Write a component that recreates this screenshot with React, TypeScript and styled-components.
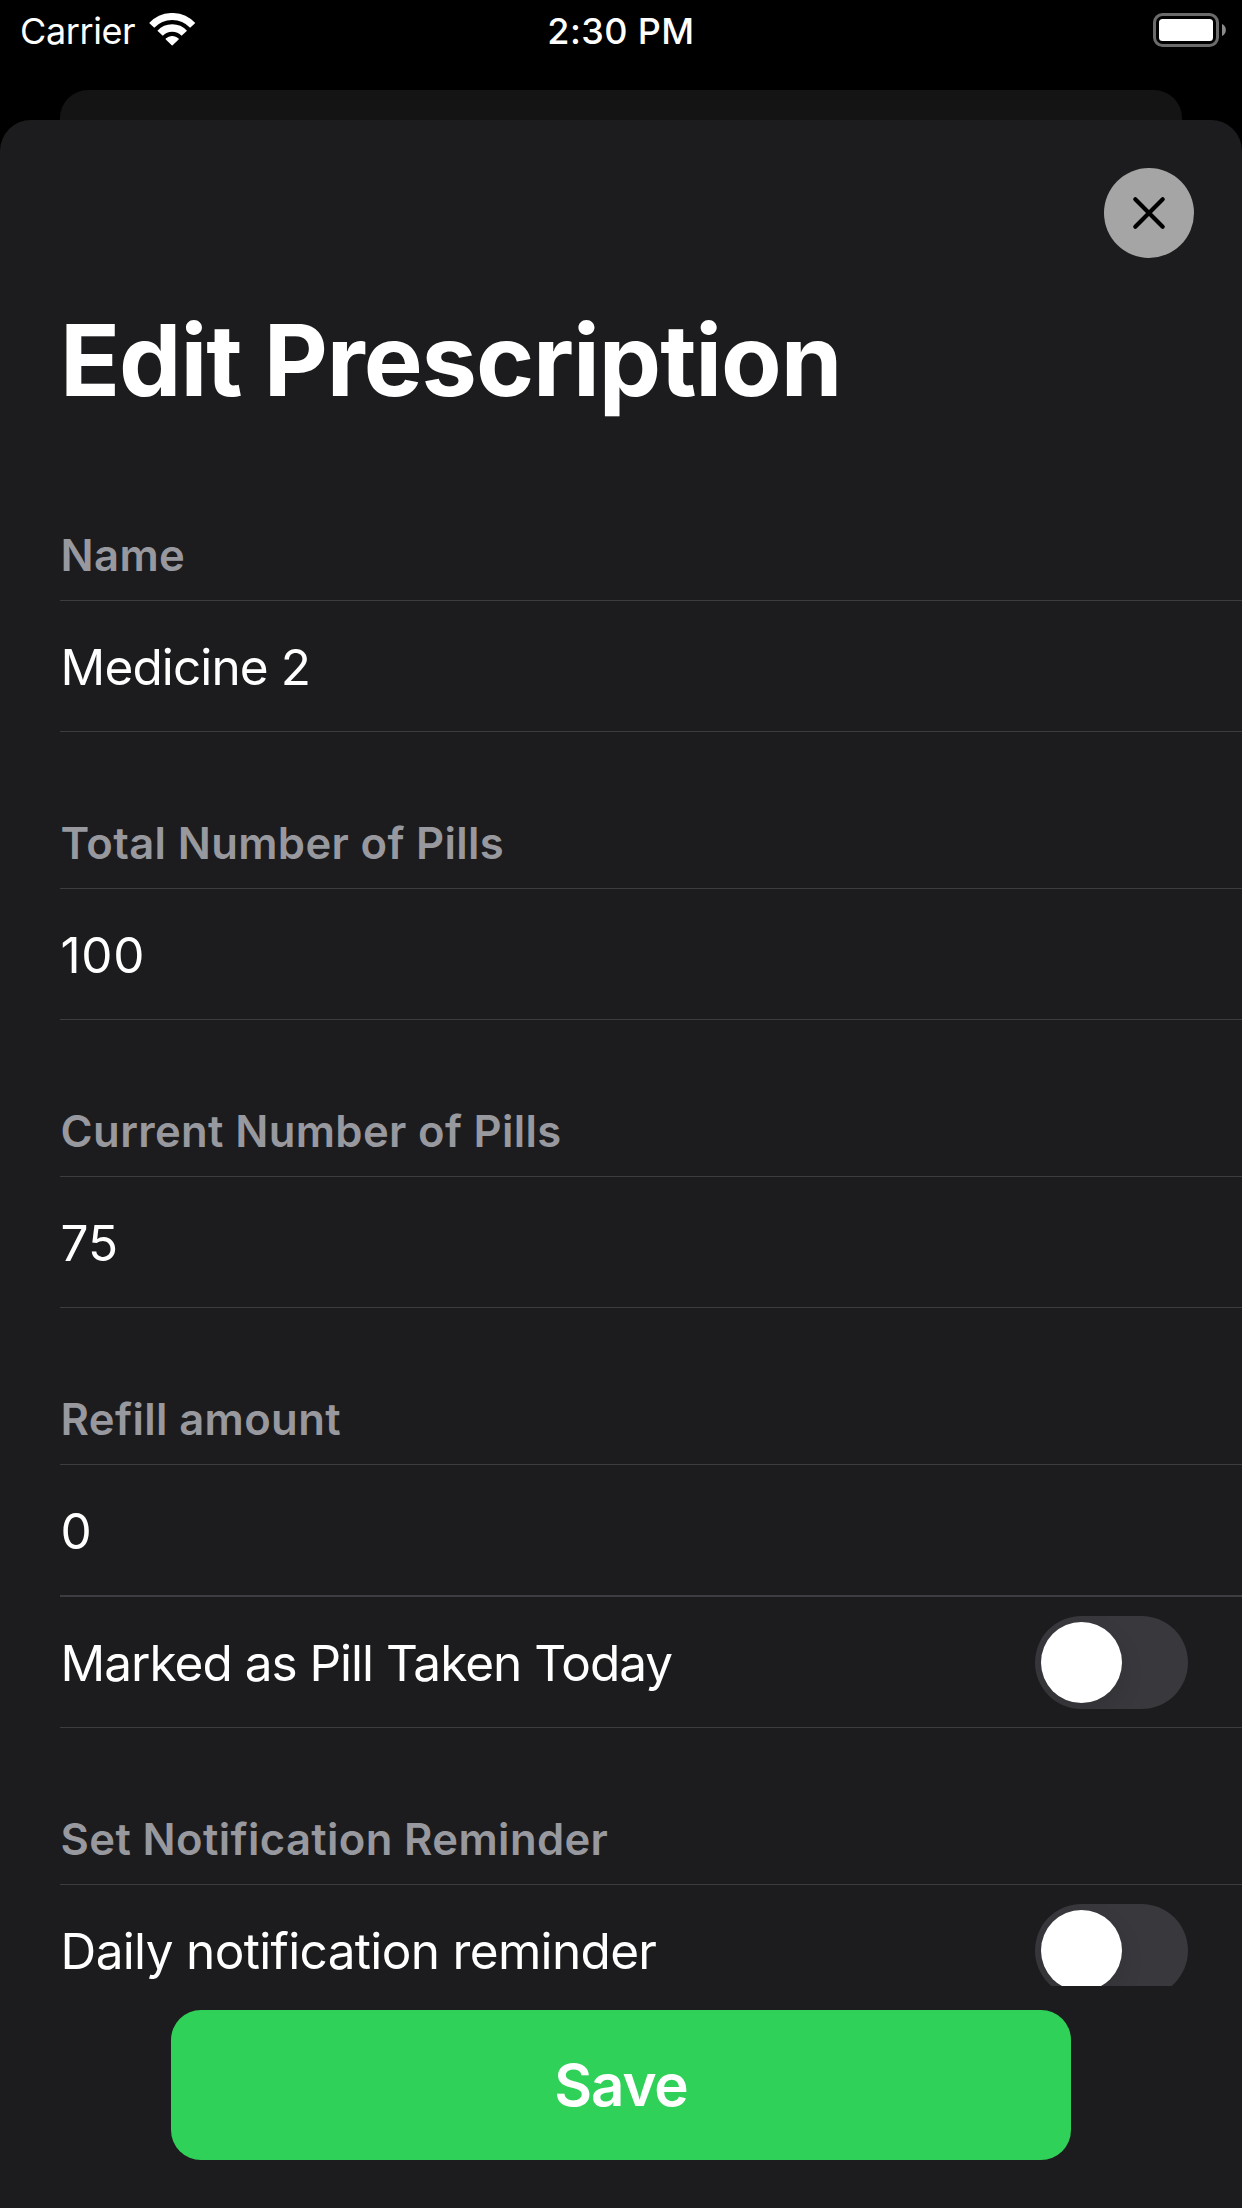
import React from 'react';
import styled, { createGlobalStyle } from 'styled-components';

const GlobalStyle = createGlobalStyle`
  *, *::before, *::after {
    box-sizing: border-box;
  }
  body {
    margin: 0;
    background: #000;
    font-family: Inter, "Liberation Sans", sans-serif;
    color: #fff;
  }
`;

const Screen = styled.div`
  display: flex;
  flex-direction: column;
  width: 1242px;
  height: 2208px;
  overflow: hidden;
  background: #000;
`;

const StatusBar = styled.header`
  flex: none;
  display: grid;
  grid-template-columns: 1fr auto 1fr;
  height: 90px;
  padding: 9px 16px 0;
  font-size: 36px;
  line-height: 44px;
`;

const CarrierGroup = styled.div`
  display: flex;
  align-items: flex-start;
  gap: 14px;
  padding-left: 4px;
  letter-spacing: -0.4px;
`;

const StatusIcon = styled.svg`
  display: block;
  flex: none;
  margin-top: 4px;
`;

const Time = styled.time`
  font-weight: 500;
  letter-spacing: 0.4px;
`;

const BatteryGroup = styled.div`
  display: flex;
  align-items: flex-start;
  justify-content: flex-end;
`;

const PresenterEdge = styled.div`
  flex: none;
  height: 30px;
  margin: 0 60px;
  border-radius: 28px 28px 0 0;
  background: #141414;
`;

const Sheet = styled.main`
  flex: 1;
  min-height: 0;
  display: flex;
  flex-direction: column;
  border-radius: 31px 31px 0 0;
  background: #1c1c1e;
`;

const SheetBar = styled.div`
  flex: none;
  display: flex;
  justify-content: flex-end;
  height: 180px;
  padding: 48px 48px 0 0;
`;

const CloseButton = styled.button`
  display: grid;
  place-items: center;
  width: 90px;
  height: 90px;
  padding: 0;
  border: 0;
  border-radius: 50%;
  background: #a5a5a5;
`;

const Title = styled.h1`
  flex: none;
  margin: 0 0 24px;
  padding-left: 60px;
  font-size: 99px;
  font-weight: 700;
  line-height: 120px;
  letter-spacing: -1.07px;
`;

const Form = styled.div`
  flex: 1;
  min-height: 0;
  overflow: hidden;
  padding-left: 60px;
`;

const SectionHeader = styled.h2`
  display: flex;
  align-items: flex-end;
  height: 157px;
  margin: 0;
  padding: 0 0 18px 0.6px;
  border-bottom: 1px solid #3d3d41;
  color: #98989f;
  font-size: 43.6px;
  font-weight: 600;
  line-height: 53px;
  letter-spacing: 0.36px;
`;

const Row = styled.div<{ $divider?: number }>`
  display: flex;
  align-items: center;
  justify-content: space-between;
  box-sizing: content-box;
  height: 130px;
  padding-right: 54px;
  border-bottom: ${({ $divider = 1 }) => $divider}px solid #3d3d41;
`;

const RowText = styled.span<{ $tracking?: number }>`
  padding: 2px 0 0 0.6px;
  font-size: 49.5px;
  line-height: 60px;
  letter-spacing: ${({ $tracking = 0 }) => $tracking}px;
  white-space: nowrap;
`;

const Switch = styled.button`
  display: flex;
  width: 153px;
  height: 93px;
  margin: 1px 0 0;
  padding: 6px;
  border: 0;
  border-radius: 47px;
  background: #39393d;
  overflow: hidden;
`;

const Knob = styled.span`
  width: 81px;
  height: 81px;
  border-radius: 50%;
  background: #fff;
  box-shadow: 0 9px 24px rgba(0, 0, 0, 0.11);
`;

const Footer = styled.footer`
  flex: none;
  display: flex;
  justify-content: center;
  padding: 24px 0 48px;
`;

const SaveButton = styled.button`
  width: 900px;
  height: 150px;
  padding: 0;
  border: 0;
  border-radius: 30px;
  background: #30d158;
  color: #fff;
  font-family: inherit;
  font-size: 58.2px;
  font-weight: 600;
  line-height: 70px;
  letter-spacing: -1.12px;
`;

type Section = { title: string; value: string; tracking?: number; divider?: number };

const sections: Section[] = [
  { title: 'Name', value: 'Medicine 2', tracking: -0.88 },
  { title: 'Total Number of Pills', value: '100', tracking: 0.6 },
  { title: 'Current Number of Pills', value: '75' },
  { title: 'Refill amount', value: '0', divider: 2 },
];

function WifiIcon() {
  return (
    <StatusIcon width="47" height="34" viewBox="0 0 47 34" fill="none">
      <path d="M2.7 12.4A28 28 0 0 1 43.7 12.4" stroke="#fff" strokeWidth="7" />
      <path d="M11.1 20.25A16.5 16.5 0 0 1 35.3 20.25" stroke="#fff" strokeWidth="7.4" />
      <path
        d="M23.2 31.9L17.2 26A8.6 8.6 0 0 1 29.2 26Z"
        fill="#fff"
        stroke="#fff"
        strokeWidth="1.2"
        strokeLinejoin="round"
      />
    </StatusIcon>
  );
}

function BatteryIcon() {
  return (
    <StatusIcon width="73" height="34" viewBox="0 0 73 34" fill="none">
      <rect x="1.5" y="1.5" width="63" height="31" rx="8" stroke="#6b6b6b" strokeWidth="3" />
      <rect x="6" y="6" width="54" height="22" rx="3.5" fill="#fff" />
      <path d="M69 11A6.6 6.6 0 0 1 69 23Z" fill="#8a8a8a" />
    </StatusIcon>
  );
}

function SwitchRow({ label, tracking }: { label: string; tracking: number }) {
  return (
    <Row>
      <RowText $tracking={tracking}>{label}</RowText>
      <Switch type="button" role="switch" aria-checked={false} aria-label={label}>
        <Knob />
      </Switch>
    </Row>
  );
}

export default function App() {
  return (
    <Screen>
      <GlobalStyle />
      <StatusBar>
        <CarrierGroup>
          <span>Carrier</span>
          <WifiIcon />
        </CarrierGroup>
        <Time>2:30 PM</Time>
        <BatteryGroup>
          <BatteryIcon />
        </BatteryGroup>
      </StatusBar>
      <PresenterEdge />
      <Sheet>
        <SheetBar>
          <CloseButton type="button" aria-label="Close">
            <svg width="34" height="34" viewBox="0 0 34 34" fill="none">
              <path
                d="M3.3 3.3L30.7 30.7M30.7 3.3L3.3 30.7"
                stroke="#000"
                strokeWidth="4.2"
                strokeLinecap="round"
              />
            </svg>
          </CloseButton>
        </SheetBar>
        <Title>Edit Prescription</Title>
        <Form>
          {sections.map((s) => (
            <React.Fragment key={s.title}>
              <SectionHeader>{s.title}</SectionHeader>
              <Row $divider={s.divider}>
                <RowText $tracking={s.tracking}>{s.value}</RowText>
              </Row>
            </React.Fragment>
          ))}
          <SwitchRow label="Marked as Pill Taken Today" tracking={-1} />
          <SectionHeader>Set Notification Reminder</SectionHeader>
          <SwitchRow label="Daily notification reminder" tracking={-0.66} />
        </Form>
        <Footer>
          <SaveButton type="button">Save</SaveButton>
        </Footer>
      </Sheet>
    </Screen>
  );
}
